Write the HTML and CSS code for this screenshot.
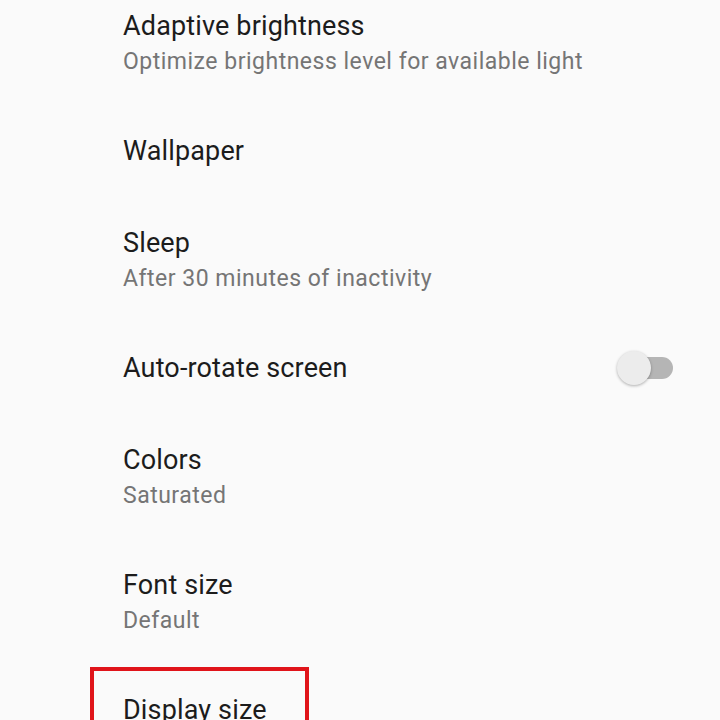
FILE: index.html
```
<!DOCTYPE html>
<html lang="en">
<head>
<meta charset="utf-8">
<title>Display settings</title>
<link rel="stylesheet" href="styles.css">
</head>
<body>
<div class="list">
  <div class="row two">
    <div class="text">
      <div class="title">Adaptive brightness</div>
      <div class="summary">Optimize brightness level for available light</div>
    </div>
  </div>
  <div class="row">
    <div class="text">
      <div class="title">Wallpaper</div>
    </div>
  </div>
  <div class="row two">
    <div class="text">
      <div class="title">Sleep</div>
      <div class="summary">After 30 minutes of inactivity</div>
    </div>
  </div>
  <div class="row">
    <div class="text">
      <div class="title">Auto-rotate screen</div>
    </div>
    <div class="switch"><div class="track"></div><div class="thumb"></div></div>
  </div>
  <div class="row two">
    <div class="text">
      <div class="title">Colors</div>
      <div class="summary">Saturated</div>
    </div>
  </div>
  <div class="row two">
    <div class="text">
      <div class="title">Font size</div>
      <div class="summary">Default</div>
    </div>
  </div>
  <div class="row last">
    <div class="text">
      <div class="title">Display size</div>
    </div>
    <div class="highlight"></div>
  </div>
</div>
</body>
</html>
```
FILE: styles.css
```
html, body {
  margin: 0;
  padding: 0;
  background: #fafafa;
  overflow: hidden;
}
body {
  font-family: Roboto, "Noto Sans", "Liberation Sans", sans-serif;
  width: 720px;
  height: 720px;
}
.list {
  margin-top: -20px;
}
.row {
  position: relative;
  display: flex;
  align-items: center;
  padding: 28px 47px 28px 123px;
}
.row.two {
  padding-top: 28px;
  padding-bottom: 26px;
}
.row.last {
  padding-top: 28px;
  padding-bottom: 0;
  height: 28px;
  align-items: flex-start;
}
.text {
  flex: 1;
}
.title {
  font-size: 27px;
  line-height: 36px;
  color: #1c1c1c;
  letter-spacing: 0.15px;
}
.summary {
  font-size: 23px;
  line-height: 34px;
  margin-top: 1px;
  color: #757575;
  letter-spacing: 0.5px;
}
.switch {
  position: relative;
  width: 56px;
  height: 36px;
}
.track {
  position: absolute;
  left: 4px;
  right: 0;
  top: 7px;
  height: 22px;
  border-radius: 11px;
  background: #b5b5b5;
}
.thumb {
  position: absolute;
  left: 0;
  top: 1px;
  width: 34px;
  height: 34px;
  border-radius: 50%;
  background: #ececec;
  box-shadow: 0 1px 3px rgba(0, 0, 0, 0.3);
}
.highlight {
  position: absolute;
  left: 90px;
  top: 3px;
  width: 211px;
  height: 120px;
  border: 4px solid #e0141a;
}
```
